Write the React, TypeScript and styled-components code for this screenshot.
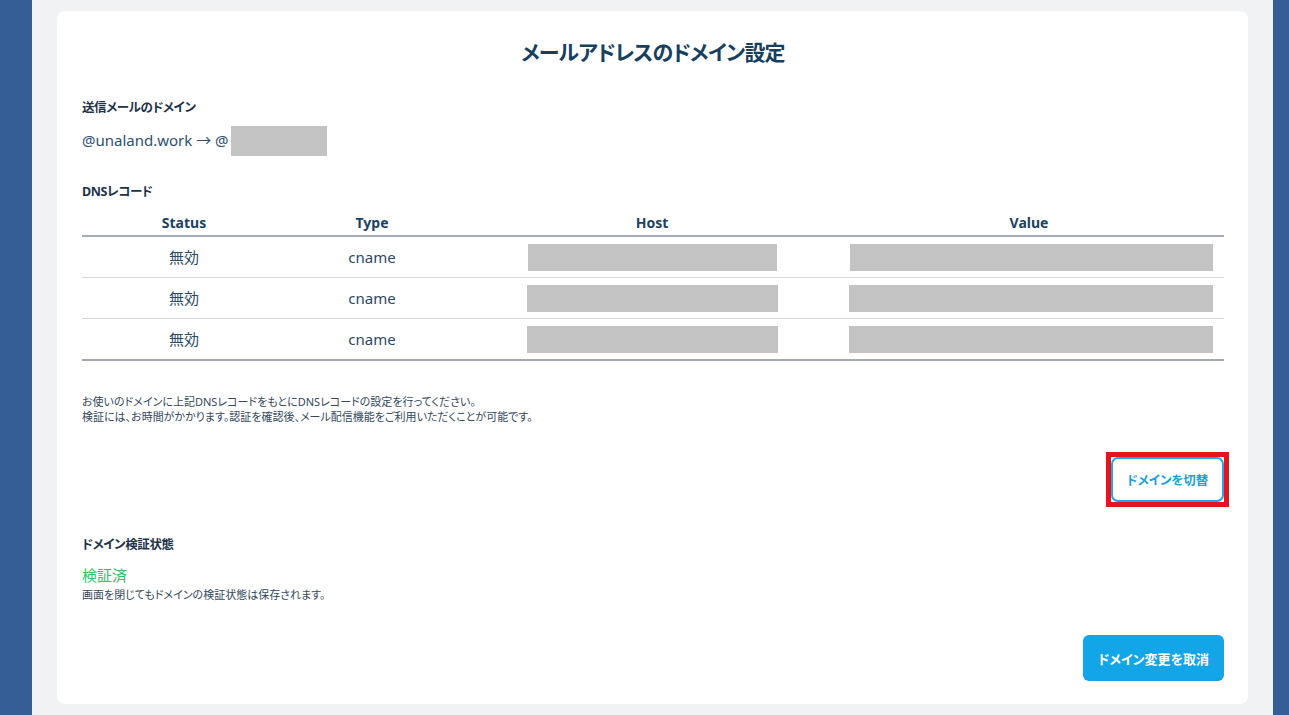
import React from "react";
import styled, { createGlobalStyle } from "styled-components";

const GlobalStyle = createGlobalStyle`
  html, body {
    margin: 0;
    padding: 0;
  }
  body {
    font-family: "Noto Sans", "Noto Sans CJK JP", sans-serif;
    font-feature-settings: "palt";
    color: #2a4a66;
  }
  * {
    box-sizing: border-box;
  }
`;

const Page = styled.div`
  display: grid;
  grid-template-columns: 32px 1fr 17px;
  height: 715px;
  background: #f1f2f4;
`;

const SideBar = styled.div`
  background: #365e96;
`;

const Main = styled.main`
  padding: 11px 25px;
`;

const Card = styled.section`
  background: #ffffff;
  border-radius: 8px;
  padding: 26px 24px 23px 25px;
  display: flex;
  flex-direction: column;
`;

const Title = styled.h1`
  margin: 0;
  text-align: center;
  font-size: 21px;
  line-height: 30px;
  letter-spacing: -0.8px;
  font-weight: 700;
  color: #17405f;
`;

const Label = styled.h2<{ $gap: number }>`
  margin: ${(p) => p.$gap}px 0 0;
  font-size: 12.5px;
  line-height: 18px;
  letter-spacing: -0.4px;
  font-weight: 700;
  color: #1e3349;
`;

const DomainLine = styled.div`
  margin-top: 9px;
  height: 30px;
  display: flex;
  align-items: center;
  font-size: 15px;
  color: #2d5072;
`;

const DomainText = styled.span`
  padding-bottom: 4px;
`;

const Masked = styled.span<{ $w: number; $h: number }>`
  display: inline-block;
  width: ${(p) => p.$w}px;
  height: ${(p) => p.$h}px;
  background: #c3c3c3;
`;

const DomainMask = styled(Masked)`
  align-self: stretch;
  height: auto;
  margin-left: 2px;
`;

const Table = styled.div`
  display: flex;
  flex-direction: column;
`;

const Columns = "204px 172px 388px 378px";

const HeadRow = styled.div`
  display: grid;
  grid-template-columns: ${Columns};
  height: 36px;
  align-items: end;
  padding-bottom: 3px;
  border-bottom: 2px solid #a6aab6;
`;

const HeadCell = styled.div<{ $pr?: number }>`
  text-align: center;
  font-size: 14px;
  line-height: 18px;
  font-weight: 700;
  color: #1b4262;
  padding-right: ${(p) => p.$pr ?? 0}px;
`;

const Row = styled.div`
  display: grid;
  grid-template-columns: ${Columns};
  align-items: center;
  height: 41px;
  border-bottom: 1px solid #d6d8de;

  &:last-child {
    height: 42px;
    border-bottom: 2px solid #a6aab6;
  }
`;

const Cell = styled.div<{ $pr?: number }>`
  display: flex;
  justify-content: center;
  font-size: 15px;
  line-height: 20px;
  color: #2a4a66;
  padding-right: ${(p) => p.$pr ?? 0}px;
`;

const Note = styled.p<{ $gap: number }>`
  margin: ${(p) => p.$gap}px 0 0;
  font-size: 11px;
  line-height: 15px;
  color: #33485c;
`;

const ButtonRow = styled.div<{ $gap: number }>`
  margin-top: ${(p) => p.$gap}px;
  display: flex;
  justify-content: flex-end;
`;

/* red marker drawn around the switch button */
const Highlight = styled.span`
  display: inline-flex;
  border: 5px solid #e8141c;
  margin-right: -5px;
  background: #ffffff;
`;

const OutlineButton = styled.button`
  width: 113px;
  height: 45px;
  border: 2px solid #22a6ea;
  border-radius: 7px;
  background: #ffffff;
  color: #1c9fe0;
  font-family: inherit;
  font-feature-settings: "palt";
  font-size: 12.5px;
  font-weight: 700;
  cursor: pointer;
`;

const FilledButton = styled.button`
  width: 141px;
  height: 46px;
  border: none;
  border-radius: 6px;
  background: #12a5e8;
  color: #ffffff;
  font-family: inherit;
  font-feature-settings: "palt";
  font-size: 13px;
  font-weight: 700;
  cursor: pointer;
`;

const Verified = styled.div`
  margin-top: 11px;
  font-size: 15px;
  line-height: 20px;
  color: #2fc36a;
`;

type DnsRecord = {
  status: string;
  type: string;
  hostWidth: number;
  valueWidth: number;
};

const records: DnsRecord[] = [
  { status: "無効", type: "cname", hostWidth: 249, valueWidth: 363 },
  { status: "無効", type: "cname", hostWidth: 251, valueWidth: 364 },
  { status: "無効", type: "cname", hostWidth: 251, valueWidth: 364 },
];

export default function App() {
  return (
    <>
      <GlobalStyle />
      <Page>
        <SideBar />
        <Main>
          <Card>
            <Title>メールアドレスのドメイン設定</Title>

            <Label $gap={32}>送信メールのドメイン</Label>
            <DomainLine>
              <DomainText>@unaland.work → @</DomainText>
              <DomainMask $w={96} $h={30} />
            </DomainLine>

            <Label $gap={27}>DNSレコード</Label>
            <Table>
              <HeadRow>
                <HeadCell>Status</HeadCell>
                <HeadCell>Type</HeadCell>
                <HeadCell>Host</HeadCell>
                <HeadCell $pr={12}>Value</HeadCell>
              </HeadRow>
              {records.map((r, i) => (
                <Row key={i}>
                  <Cell>{r.status}</Cell>
                  <Cell>{r.type}</Cell>
                  <Cell>
                    <Masked $w={r.hostWidth} $h={27} />
                  </Cell>
                  <Cell $pr={8}>
                    <Masked $w={r.valueWidth} $h={27} />
                  </Cell>
                </Row>
              ))}
            </Table>

            <Note $gap={33}>
              お使いのドメインに上記DNSレコードをもとにDNSレコードの設定を行ってください。
              <br />
              検証には、お時間がかかります。認証を確認後、メール配信機能をご利用いただくことが可能です。
            </Note>

            <ButtonRow $gap={28}>
              <Highlight>
                <OutlineButton type="button">ドメインを切替</OutlineButton>
              </Highlight>
            </ButtonRow>

            <Label $gap={29}>ドメイン検証状態</Label>
            <Verified>検証済</Verified>
            <Note $gap={2}>画面を閉じてもドメインの検証状態は保存されます。</Note>

            <ButtonRow $gap={33}>
              <FilledButton type="button">ドメイン変更を取消</FilledButton>
            </ButtonRow>
          </Card>
        </Main>
        <SideBar />
      </Page>
    </>
  );
}
